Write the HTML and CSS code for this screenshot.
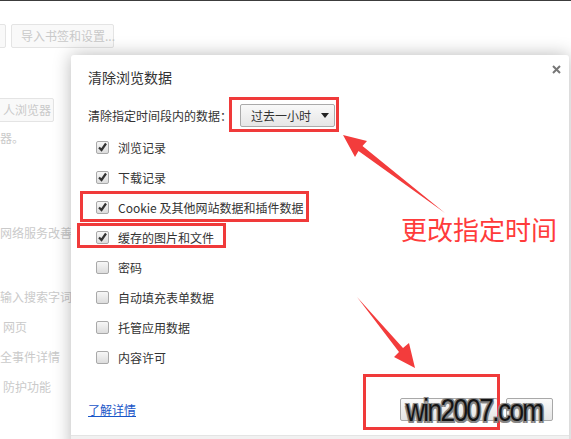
FILE: index.html
```html
<!DOCTYPE html>
<html lang="zh-CN">
<head>
<meta charset="utf-8">
<title>清除浏览数据</title>
<link rel="stylesheet" href="styles.css">
</head>
<body>
<div class="topline"></div>
<div class="page">
  <div class="btnrow">
    <span class="pbtn pbtn-cut"></span>
    <span class="pbtn pbtn-import">导入书签和设置...</span>
  </div>
  <div class="pbtn pbtn-default">人浏览器</div>
  <div class="pline pl-1">器。</div>
  <div class="pline pl-2">网络服务改善体</div>
  <div class="pline pl-3">输入搜索字词</div>
  <div class="pline pl-4">网页</div>
  <div class="pline pl-4 pl-cut">全事件详情</div>
  <div class="pline pl-4 pl-shift">防护功能</div>
</div>

<div class="dialog">
  <svg class="close" width="9" height="9" viewBox="0 0 9 9"><path d="M1 1L8 8M8 1L1 8" stroke="#777" stroke-width="2"/></svg>
  <div class="title">清除浏览数据</div>
  <div class="time-row">
    <span>清除指定时间段内的数据：</span>
    <div class="select"><span>过去一小时</span><span class="tri"></span></div>
  </div>
  <div class="options">
    <div class="opt"><span class="cb"><svg width="11" height="11" viewBox="0 0 11 11"><path d="M2 5.5L4.5 8L9 1.5" fill="none" stroke="#333" stroke-width="2.2"/></svg></span>浏览记录</div>
    <div class="opt"><span class="cb"><svg width="11" height="11" viewBox="0 0 11 11"><path d="M2 5.5L4.5 8L9 1.5" fill="none" stroke="#333" stroke-width="2.2"/></svg></span>下载记录</div>
    <div class="opt"><span class="cb"><svg width="11" height="11" viewBox="0 0 11 11"><path d="M2 5.5L4.5 8L9 1.5" fill="none" stroke="#333" stroke-width="2.2"/></svg></span>Cookie 及其他网站数据和插件数据</div>
    <div class="opt"><span class="cb"><svg width="11" height="11" viewBox="0 0 11 11"><path d="M2 5.5L4.5 8L9 1.5" fill="none" stroke="#333" stroke-width="2.2"/></svg></span>缓存的图片和文件</div>
    <div class="opt"><span class="cb"></span>密码</div>
    <div class="opt"><span class="cb"></span>自动填充表单数据</div>
    <div class="opt"><span class="cb"></span>托管应用数据</div>
    <div class="opt"><span class="cb"></span>内容许可</div>
  </div>
  <div class="action-row">
    <a class="link" href="#">了解详情</a>
    <div class="btns">
      <span class="btn btn-main"></span>
      <span class="btn btn-cancel"></span>
    </div>
  </div>
  <div class="footer"></div>
</div>

<div class="rbox rb-1"></div>
<div class="rbox rb-2"></div>
<div class="rbox rb-3"></div>
<div class="rbox rb-4"></div>

<svg class="arrows" width="571" height="439" viewBox="0 0 571 439">
  <polygon points="343,135 367,141 362.5,146 445,213 358.5,151 355,157" fill="#f33c3c"/>
  <polygon points="357,297 403,348 409,343 415,368 394,357 399,352" fill="#f33c3c"/>
</svg>

<div class="note">更改指定时间</div>
<div class="wm">win2007.com</div>
</body>
</html>
```

FILE: styles.css
```css
* { box-sizing: border-box; }
html, body { margin: 0; padding: 0; overflow: hidden; }
body {
  position: relative;
  width: 571px;
  height: 439px;
  background: #fff;
  font-family: "Noto Sans CJK SC", "Microsoft YaHei", sans-serif;
}
.topline { height: 1px; background: #3c3c3c; }

.page { padding-top: 23px; color: #cacaca; font-size: 12px; }
.btnrow { display: flex; gap: 5px; margin-left: -40px; }
.pbtn {
  display: block;
  height: 24px;
  border: 1px solid #e4e4e4;
  border-radius: 2px;
  background: #f9f9f9;
  line-height: 22px;
  padding: 0 9px;
  color: #c9c9c9;
  white-space: nowrap;
}
.pbtn-cut { width: 46px; }
.pbtn-import { width: 103px; }
.pbtn-default { width: 64px; margin: 50px 0 0 -10px; padding-left: 12px; }
.pline { line-height: 16px; white-space: nowrap; }
.pl-1 { margin-top: 8px; }
.pl-2 { margin-top: 79px; }
.pl-3 { margin-top: 48px; }
.pl-4 { margin-top: 14px; margin-left: 3px; }
.pl-cut { margin-left: 0; }
.pl-shift { margin-left: 3px; }

.dialog {
  position: absolute;
  left: 71px;
  top: 55px;
  width: 498px;
  height: 400px;
  background: #fff;
  border-radius: 3px;
  box-shadow: 0 0 18px rgba(0,0,0,0.28);
  color: #333;
  font-size: 12px;
}
.close { position: absolute; right: 8px; top: 10px; }
.title { font-size: 14px; line-height: 20px; padding: 12px 0 0 17px; }
.time-row { display: flex; align-items: center; gap: 8px; height: 24px; margin-top: 16px; padding-left: 17px; }
.select {
  width: 95px;
  height: 23px;
  border: 1px solid #aaa;
  border-radius: 2px;
  background: linear-gradient(#f9f9f9, #e6e6e6);
  display: flex;
  align-items: center;
  justify-content: space-between;
  padding: 0 5px 0 10px;
}
.tri { width: 0; height: 0; border-left: 4px solid transparent; border-right: 4px solid transparent; border-top: 5px solid #222; }

.options { margin-top: 5px; padding-left: 25px; }
.opt { display: flex; align-items: center; height: 30px; }
.cb {
  width: 13px;
  height: 13px;
  border: 1px solid #a9a9a9;
  border-radius: 2px;
  background: linear-gradient(#f7f7f7, #dcdcdc);
  margin-right: 9px;
  display: flex;
  align-items: center;
  justify-content: center;
}
.action-row { display: flex; justify-content: space-between; align-items: center; height: 24px; margin-top: 25px; padding: 0 16px 0 17px; }
.link { color: #1a56c8; text-decoration: underline; font-size: 12px; }
.btns { display: flex; gap: 8px; }
.btn { display: block; height: 23px; border: 1px solid #a8a8a8; border-radius: 2px; background: linear-gradient(#fafafa, #e4e4e4); }
.btn-main { width: 98px; }
.btn-cancel { width: 47px; }
.footer { margin-top: 14px; height: 20px; background: #f1f1f1; border-top: 1px solid #e4e4e4; }

.rbox { position: absolute; border: 3px solid #f03a3a; }
.rb-1 { left: 229px; top: 97px; width: 110px; height: 35px; }
.rb-2 { left: 80px; top: 191px; width: 229px; height: 31px; }
.rb-3 { left: 77px; top: 223px; width: 149px; height: 25px; }
.rb-4 { left: 363px; top: 374px; width: 137px; height: 56px; }

.arrows { position: absolute; left: 0; top: 0; }
.note {
  position: absolute;
  left: 401px;
  top: 212px;
  font-size: 26px;
  line-height: 34px;
  color: #ff3b3b;
  white-space: nowrap;
}
.wm {
  position: absolute;
  left: 406px;
  top: 393px;
  font-family: "Liberation Sans", Arial, sans-serif;
  font-size: 32px;
  line-height: 34px;
  letter-spacing: -2px;
  color: #141414;
  white-space: nowrap;
  transform: scaleX(0.82);
  transform-origin: left center;
  text-shadow: -1.5px -1.5px 0 #858585, 1.5px -1.5px 0 #858585, -1.5px 1.5px 0 #858585, 1.5px 1.5px 0 #858585, 0 0 2px #999;
}
```
